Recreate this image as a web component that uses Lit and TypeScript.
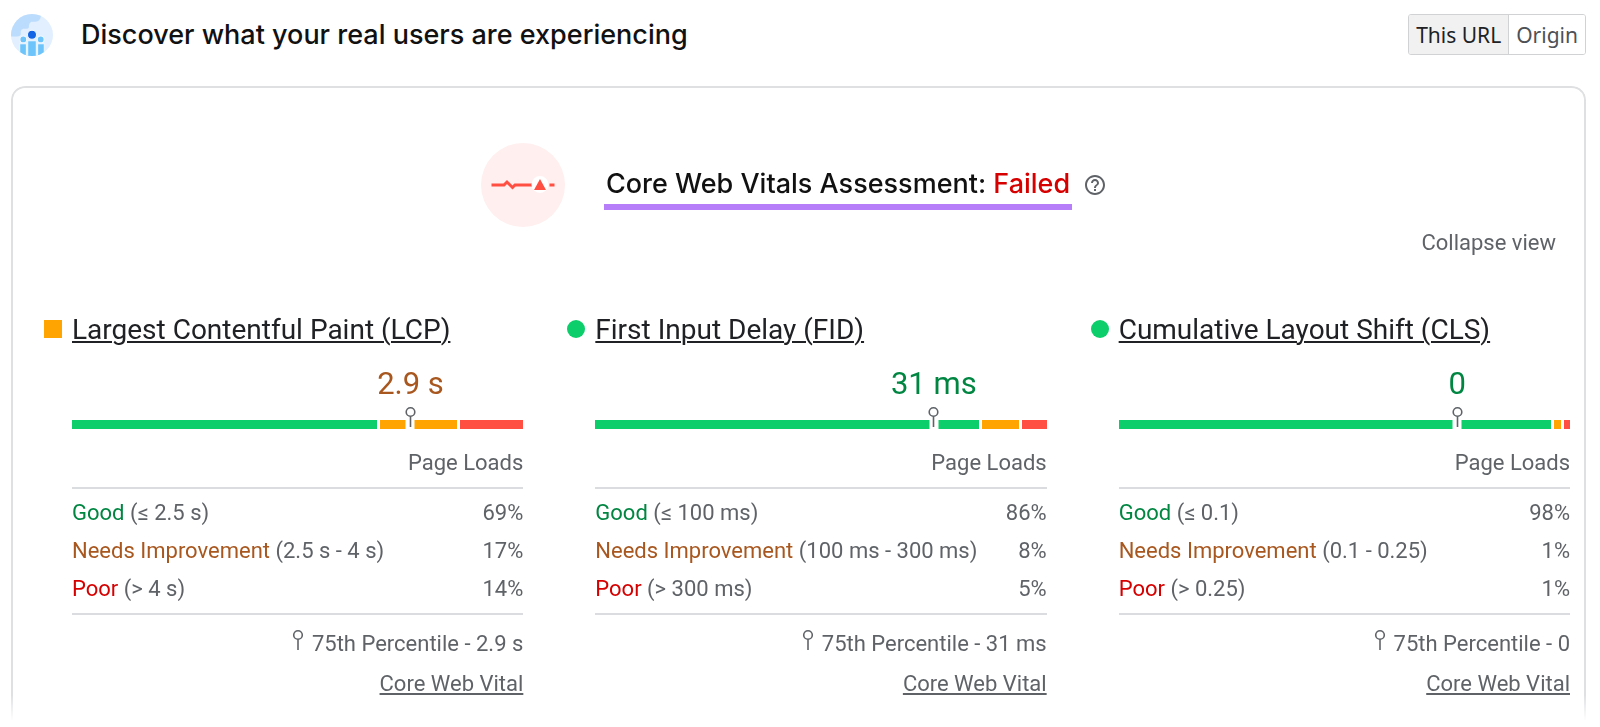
import { LitElement, html, css, svg } from "lit";
import { customElement, property, state } from "lit/decorators.js";
import { classMap } from "lit/directives/class-map.js";
import { styleMap } from "lit/directives/style-map.js";

type Rating = "good" | "average" | "poor";

interface Bucket {
  rating: Rating;
  label: string;
  range: string;
  share: number;
}

interface Metric {
  name: string;
  value: string;
  rating: Rating;
  buckets: Bucket[];
}

const buckets = (ranges: string[], shares: number[]): Bucket[] => [
  { rating: "good", label: "Good", range: ranges[0], share: shares[0] },
  { rating: "average", label: "Needs Improvement", range: ranges[1], share: shares[1] },
  { rating: "poor", label: "Poor", range: ranges[2], share: shares[2] },
];

const METRICS: Metric[] = [
  {
    name: "Largest Contentful Paint (LCP)",
    value: "2.9 s",
    rating: "average",
    buckets: buckets(["(≤ 2.5 s)", "(2.5 s - 4 s)", "(> 4 s)"], [69, 17, 14]),
  },
  {
    name: "First Input Delay (FID)",
    value: "31 ms",
    rating: "good",
    buckets: buckets(["(≤ 100 ms)", "(100 ms - 300 ms)", "(> 300 ms)"], [86, 8, 5]),
  },
  {
    name: "Cumulative Layout Shift (CLS)",
    value: "0",
    rating: "good",
    buckets: buckets(["(≤ 0.1)", "(0.1 - 0.25)", "(> 0.25)"], [98, 1, 1]),
  },
];

const pinShape = svg`
  <circle cx="6" cy="6" r="4.3" fill="#fff" stroke="#5f6368" stroke-width="1.6"></circle>
  <path d="M6 10.3V21" stroke="#5f6368" stroke-width="1.6"></path>`;

@customElement("field-metric")
export class FieldMetric extends LitElement {
  @property({ attribute: false }) metric!: Metric;

  static styles = css`
    :host {
      display: block;
      min-width: 0;
      color: #5f6368;
      font: 400 22px/38px Roboto, sans-serif;
    }
    .title {
      display: flex;
      align-items: center;
      gap: 10px;
      margin: 0;
      font-size: 28px;
      font-weight: 400;
      line-height: 38px;
    }
    .mark {
      flex: none;
      width: 18px;
      height: 18px;
      margin-bottom: 2px;
    }
    .mark.good {
      border-radius: 50%;
      background: #0cce6b;
    }
    .mark.average {
      background: #ffa400;
    }
    .mark.poor {
      background: #ff4e42;
    }
    a {
      color: inherit;
      text-decoration: underline;
      text-decoration-thickness: 2px;
      text-underline-offset: 2px;
    }
    .title a {
      color: #202124;
    }
    .body {
      padding-left: 28px;
    }
    .value {
      width: 50%;
      margin: 15px 0 0 50%;
      text-align: center;
      font-size: 31px;
      line-height: 40px;
    }
    .text.good {
      color: #018642;
    }
    .text.average {
      color: #a8571f;
    }
    .text.poor {
      color: #d60000;
    }
    .bar {
      position: relative;
      display: flex;
      gap: 3px;
      height: 9px;
      margin-top: 16px;
    }
    .segment {
      flex-basis: 2px;
    }
    .segment.good {
      background: #0cce6b;
    }
    .segment.average {
      background: #ffa400;
    }
    .segment.poor {
      background: #ff4e42;
    }
    .marker {
      position: absolute;
      left: 75%;
      bottom: 0;
      width: 9px;
      height: 9px;
      transform: translateX(-50%);
      background: #fff;
    }
    .marker svg {
      position: absolute;
      left: 50%;
      bottom: 2px;
      transform: translateX(-50%);
    }
    .pin {
      display: block;
      width: 12px;
      height: 21px;
    }
    table {
      width: 100%;
      border-collapse: collapse;
    }
    th,
    td {
      padding: 0;
      font-weight: 400;
      text-align: left;
    }
    thead th {
      height: 59px;
      padding-top: 10px;
      box-sizing: border-box;
      line-height: 30px;
    }
    .share {
      text-align: right;
    }
    tbody {
      border-top: 2px solid #dadce0;
      border-bottom: 2px solid #dadce0;
    }
    tbody th,
    tbody td {
      height: 38px;
    }
    tbody tr:first-child > * {
      padding-top: 5px;
    }
    tbody tr:last-child > * {
      padding-bottom: 5px;
    }
    .percentile {
      display: flex;
      justify-content: flex-end;
      align-items: center;
      gap: 8px;
      margin-top: 10px;
    }
    .percentile .pin {
      margin-bottom: 10px;
    }
    .note {
      text-align: right;
      margin-top: 2px;
    }
  `;

  render() {
    const m = this.metric;
    return html`
      <h3 class="title">
        <span class=${classMap({ mark: true, [m.rating]: true })}></span>
        <a href="#">${m.name}</a>
      </h3>
      <div class="body">
        <div class=${classMap({ value: true, text: true, [m.rating]: true })}>${m.value}</div>
        <div class="bar">
          ${m.buckets.map(
            (b) => html`<div
              class=${classMap({ segment: true, [b.rating]: true })}
              style=${styleMap({ flexGrow: String(b.share) })}
            ></div>`
          )}
          <div class="marker">
            <svg class="pin" viewBox="0 0 12 21" fill="none" aria-hidden="true">${pinShape}</svg>
          </div>
        </div>
        <table>
          <thead>
            <tr>
              <th class="share" scope="col" colspan="2">Page Loads</th>
            </tr>
          </thead>
          <tbody>
            ${m.buckets.map(
              (b) => html`<tr>
                <th scope="row">
                  <span class=${classMap({ text: true, [b.rating]: true })}>${b.label}</span>
                  ${b.range}
                </th>
                <td class="share">${b.share}%</td>
              </tr>`
            )}
          </tbody>
        </table>
        <div class="percentile">
          <svg class="pin" viewBox="0 0 12 21" fill="none" aria-hidden="true">${pinShape}</svg>
          <span>75th Percentile - ${m.value}</span>
        </div>
        <div class="note"><a href="#">Core Web Vital</a></div>
      </div>
    `;
  }
}

@customElement("app-root")
export class AppRoot extends LitElement {
  @state() private scope = "This URL";

  static styles = css`
    :host {
      display: block;
      background: #fff;
      color: #111;
      font-family: Roboto, sans-serif;
    }
    .page {
      padding: 14px 14px 0 11px;
    }
    .header {
      display: flex;
      align-items: center;
      height: 41px;
      gap: 28px;
    }
    .header-icon {
      flex: none;
      width: 42px;
      height: 42px;
    }
    .heading {
      flex: 1;
      margin: 0;
      font: 500 27px/36px Inter, sans-serif;
    }
    .toggle {
      display: flex;
      height: 41px;
      box-sizing: border-box;
      border: 1px solid #d0d2d4;
      border-radius: 3px;
      overflow: hidden;
    }
    .toggle button {
      border: 0;
      margin: 0;
      padding: 0 7px;
      background: #fff;
      color: #4d5156;
      font: 400 21px/38px "Noto Sans", sans-serif;
    }
    .toggle button + button {
      border-left: 1px solid #d0d2d4;
    }
    .toggle button.active {
      background: #f1f1f2;
      color: #202124;
    }
    .card {
      margin-top: 31px;
      padding: 55px 14px 22px 31px;
      border: 2px solid #dfe0e2;
      border-bottom: 0;
      border-radius: 14px 14px 0 0;
      -webkit-mask-image: linear-gradient(#000 calc(100% - 30px), transparent calc(100% - 4px));
      mask-image: linear-gradient(#000 calc(100% - 30px), transparent calc(100% - 4px));
    }
    .assessment {
      display: flex;
      justify-content: center;
      align-items: center;
      padding-right: 28px;
    }
    .status-icon {
      flex: none;
      width: 84px;
      height: 84px;
      margin-right: 39px;
    }
    .verdict {
      margin: 0 13px 0 0;
      padding: 8px 2px 4px;
      border-bottom: 6px solid #b67ef8;
      font: 500 27px/32px Inter, sans-serif;
    }
    .failed {
      color: #d60000;
    }
    .help {
      display: flex;
      padding: 0;
      border: 0;
      background: none;
    }
    .actions {
      display: flex;
      justify-content: flex-end;
      padding-right: 14px;
    }
    .actions button {
      padding: 0;
      border: 0;
      background: none;
      color: #5f6368;
      font: 400 22px/32px Roboto, sans-serif;
    }
    .metrics {
      display: grid;
      grid-template-columns: repeat(3, minmax(0, 1fr));
      gap: 44px;
      margin-top: 52px;
    }
  `;

  private headerIcon() {
    return html`<svg class="header-icon" viewBox="0 0 41 41" aria-hidden="true">
      <defs>
        <clipPath id="disc"><circle cx="20.5" cy="20.5" r="20.5"></circle></clipPath>
      </defs>
      <g clip-path="url(#disc)">
        <rect width="41" height="41" fill="#e1effe"></rect>
        <path
          d="M0 0H29V3Q28 7.5 24 7.5H20Q18 8 17.5 11V13Q17 14.500 15 14.500H12Q9.500 15 9.500 17V20Q9 22 6 22H0Z"
          fill="#bcdcfd"
        ></path>
        <g stroke="#f1f8ff" stroke-width="1">
          <circle cx="12" cy="24.800" r="3.300" fill="#6dc4fb"></circle>
          <circle cx="29" cy="24.800" r="3.300" fill="#6dc4fb"></circle>
          <path d="M8.500 29H15V42H8.500ZM26 29H32.500V42H26Z" fill="#6dc4fb"></path>
          <path d="M16.300 26.200H24.700V42H16.300Z" fill="#6dc4fb"></path>
          <circle cx="20.500" cy="20.300" r="4.400" fill="#1264e4"></circle>
        </g>
      </g>
    </svg>`;
  }

  private statusIcon() {
    return html`<svg class="status-icon" viewBox="0 0 84 84" fill="none" aria-hidden="true">
      <circle cx="42" cy="42" r="42" fill="#ffefee"></circle>
      <path d="M10.500 42H23L26 39L31.500 44.500L34 42H51" stroke="#ff4e42" stroke-width="3"></path>
      <path d="M68.500 42H73.500" stroke="#ff4e42" stroke-width="3"></path>
      <circle cx="59" cy="41.500" r="8.500" fill="#fff"></circle>
      <path d="M59 36L65 47H53Z" fill="#ff4e42"></path>
    </svg>`;
  }

  render() {
    return html`
      <div class="page">
        <header class="header">
          ${this.headerIcon()}
          <h1 class="heading">Discover what your real users are experiencing</h1>
          <div class="toggle" role="group" aria-label="Data scope">
            ${["This URL", "Origin"].map(
              (s) => html`<button
                class=${classMap({ active: this.scope === s })}
                aria-pressed=${this.scope === s ? "true" : "false"}
                @click=${() => (this.scope = s)}
              >${s}</button>`
            )}
          </div>
        </header>
        <main class="card">
          <div class="assessment">
            ${this.statusIcon()}
            <h2 class="verdict">Core Web Vitals Assessment: <span class="failed">Failed</span></h2>
            <button class="help" aria-label="About this assessment">
              <svg width="20" height="20" viewBox="2 2 20 20" fill="#5f6368" aria-hidden="true">
                <path
                  d="M11 18h2v-2h-2v2zm1-16C6.480 2 2 6.480 2 12s4.480 10 10 10 10-4.480 10-10S17.520 2 12 2zm0 18c-4.410 0-8-3.590-8-8s3.590-8 8-8 8 3.590 8 8-3.590 8-8 8zm0-14c-2.210 0-4 1.790-4 4h2c0-1.100.9-2 2-2s2 .9 2 2c0 2-3 1.750-3 5h2c0-2.250 3-2.500 3-5 0-2.210-1.790-4-4-4z"
                ></path>
              </svg>
            </button>
          </div>
          <div class="actions"><button>Collapse view</button></div>
          <section class="metrics">
            ${METRICS.map((m) => html`<field-metric .metric=${m}></field-metric>`)}
          </section>
        </main>
      </div>
    `;
  }
}
